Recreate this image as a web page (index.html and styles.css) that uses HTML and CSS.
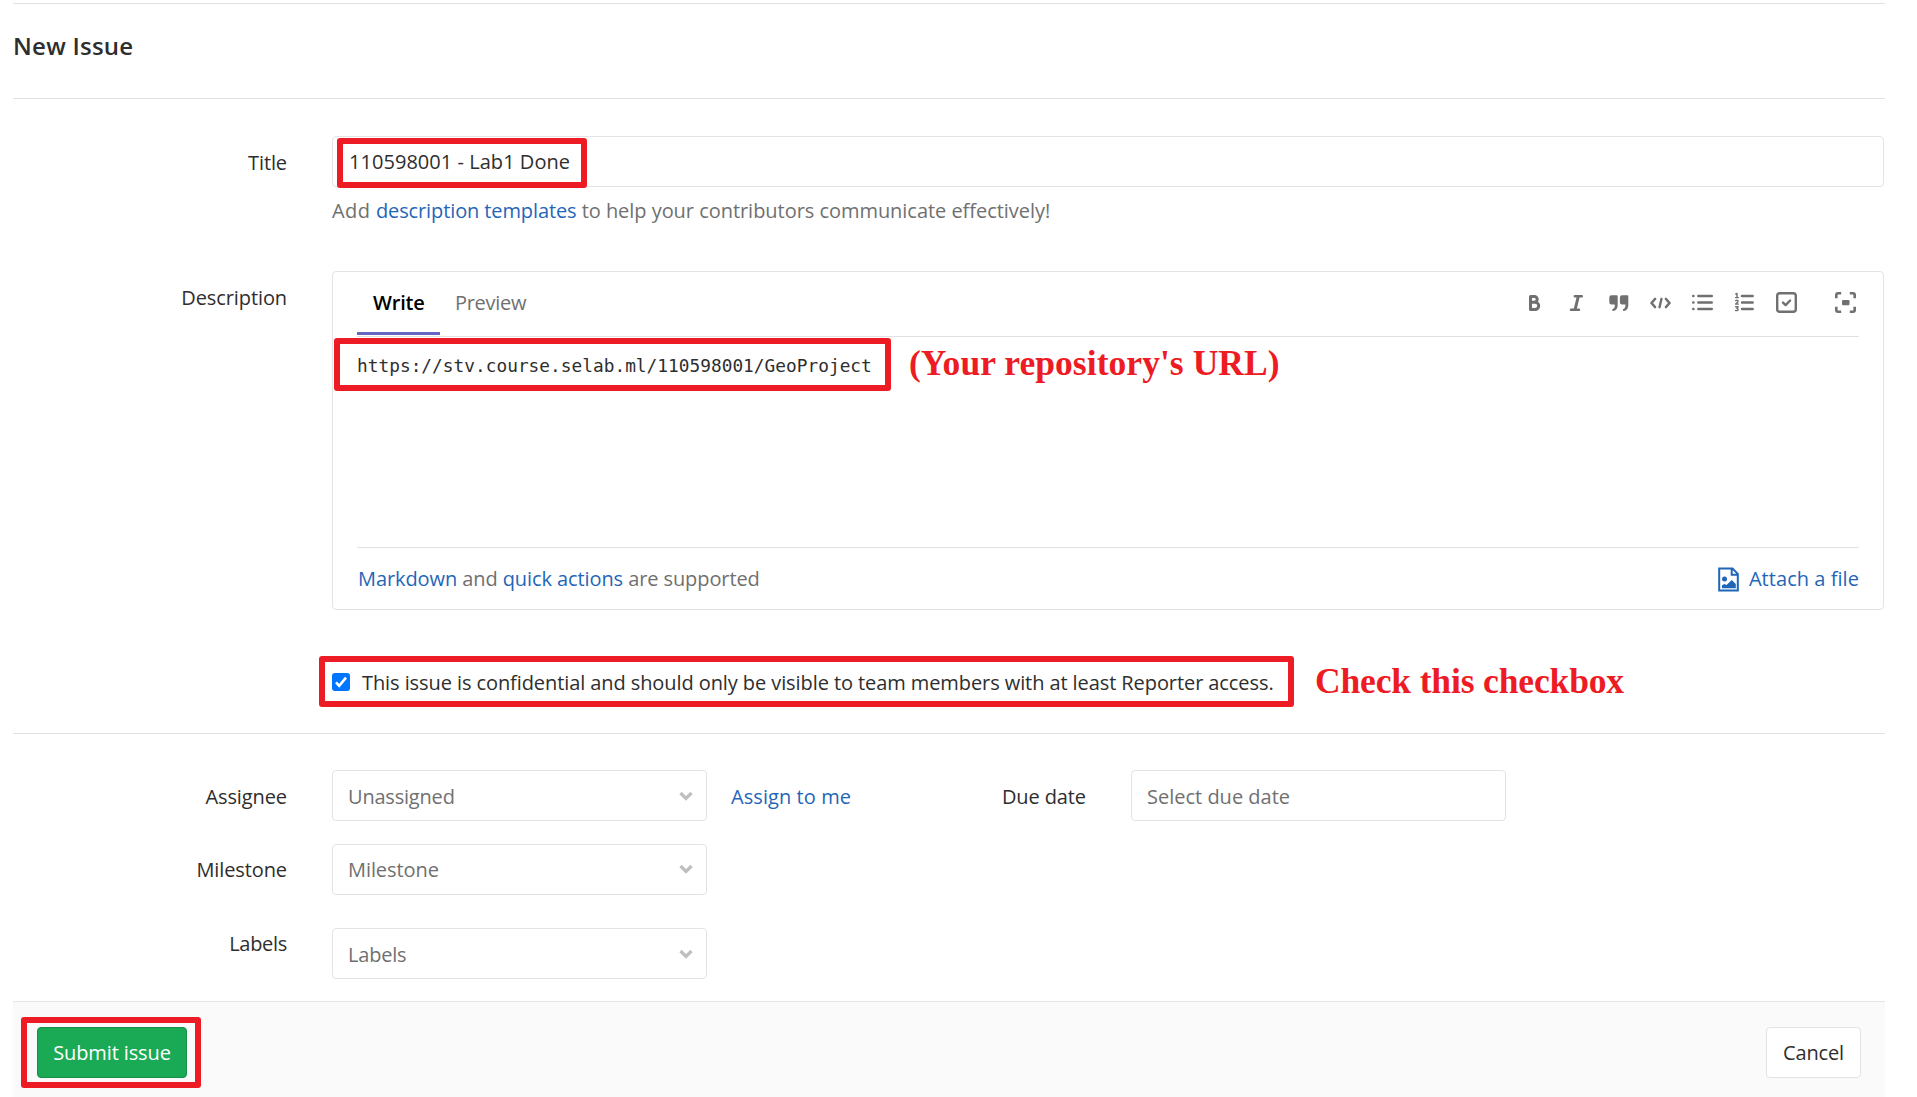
FILE: index.html
```html
<!DOCTYPE html>
<html lang="en">
<head>
<meta charset="utf-8">
<title>New Issue</title>
<link rel="stylesheet" href="styles.css">
</head>
<body>
<main class="page">
  <header class="page-header"><h1 class="page-title">New Issue</h1></header>

  <form class="issue-form">
    <div class="row title-row">
      <label class="label label-input">Title</label>
      <div class="field">
        <div class="input title-input">
          <span class="title-value">110598001 - Lab1 Done</span>
          <span class="mark mark-title"></span>
        </div>
        <p class="help"><span class="help-lead">Add </span><a class="link help-link">description templates</a> to help your contributors communicate effectively!</p>
      </div>
    </div>

    <div class="row description-row">
      <label class="label label-description">Description</label>
      <div class="editor">
        <div class="editor-head">
          <div class="tabs">
            <span class="tab tab-active">Write</span>
            <span class="tab">Preview</span>
          </div>
          <div class="toolbar">
            <svg class="icon" viewBox="0 0 21 21"><path class="s3" d="M6.500 4.500h3.900a2.800 2.800 0 0 1 0 5.700h-3.900zM6.500 10.200h4.600a3.500 3.500 0 0 1 0 7.300H6.500z"/></svg>
            <svg class="icon" viewBox="0 0 21 21"><path class="s25" d="M8.800 4.200h7M5 17.800h8"/><path class="s3" d="M12.300 4.500L9.100 17.500"/></svg>
            <svg class="icon" viewBox="0 0 21 21"><path class="fill" d="M3.500 3.200h5.300q.9 0 .9.900v9q0 5.300-4.200 5.800-1.300 0-1.300-1 0-1 1-1.200 1.600-.4 1.600-2.700v-1.500H3.500q-2.200 0-2.200-2.200v-4.900q0-2.200 2.200-2.200zM14.100 3.200h5.300q.9 0 .9.900v9q0 5.300-4.200 5.800-1.300 0-1.300-1 0-1 1-1.200 1.600-.4 1.600-2.700v-1.500h-3.300q-2.200 0-2.200-2.200v-4.900q0-2.200 2.200-2.200z"/></svg>
            <svg class="icon" viewBox="0 0 21 21"><path class="s26" d="M5 7L1.500 11 5 15M16 7l3.500 4-3.500 4"/><path class="s25" d="M11.500 6.800l-2 8.400"/></svg>
            <svg class="icon" viewBox="0 0 21 21"><path class="s25" d="M6.300 4h13.500M6.300 10.500h13.500M6.300 17h13.500"/><path class="s26" d="M1.300 4h.1M1.300 10.500h.1M1.300 17h.1"/></svg>
            <svg class="icon" viewBox="0 0 21 21"><path class="s25" d="M8 4h10.700M8 10.500h10.700M8 17h10.700"/><path class="s1" d="M1.800 2l1.200-.5v4M1.600 5.600h2.800M1.600 8.600q2.500-.9 2.500.7 0 .8-2.500 2.800h2.800M1.600 14.800h2.500l-1.200 1.700q1.400.1 1.200 1.300-.4 1.200-2.500.7"/></svg>
            <svg class="icon" viewBox="0 0 21 21"><rect class="s25" x="1.200" y="1.200" width="18.600" height="18.600" rx="2.600"/><path class="s25" d="M7 10.600l2.600 2.500 4.500-4.600"/></svg>
            <svg class="icon icon-full" viewBox="0 0 21 21"><path class="s26" d="M1.300 6.200V3q0-1.700 1.700-1.700h3.200M14.800 1.300H18q1.700 0 1.700 1.700v3.200M19.700 14.800V18q0 1.700-1.700 1.700h-3.200M6.200 19.700H3q-1.700 0-1.700-1.700v-3.200"/><rect class="fill" x="7" y="8" width="7.500" height="5.200" rx="1.200"/></svg>
          </div>
        </div>
        <div class="editor-body">
          <span class="url">https://stv.course.selab.ml/110598001/GeoProject</span>
          <span class="mark mark-url"></span>
          <span class="note note-url">(Your repository's URL)</span>
        </div>
        <div class="editor-foot">
          <span><a class="link">Markdown</a> and <a class="link">quick actions</a> are supported</span>
          <a class="link attach">
            <svg class="file-icon" viewBox="0 0 21 25"><path class="file-line" d="M1.200 1.500h13.300l5.300 5.300v16.700H1.200zM13.700 1.500v6.300h6"/><circle cx="6.500" cy="12" r="2.500"/><path d="M4 21.300v-3l2.500-1.300 2 .9 5.300-4.900 4 4v4.300z"/></svg>
            <span class="attach-text">Attach a file</span>
          </a>
        </div>
      </div>
    </div>

    <div class="confidential">
      <span class="checkbox"><svg viewBox="0 0 18 18"><path d="M4 9.400l3.200 3.400L14 4.600"/></svg></span>
      <span class="confidential-text">This issue is confidential and should only be visible to team members with at least Reporter access.</span>
      <span class="mark mark-confidential"></span>
      <span class="note note-checkbox">Check this checkbox</span>
    </div>

    <div class="meta">
      <div class="meta-column">
        <div class="row">
          <label class="label label-select">Assignee</label>
          <div class="select tight">Unassigned<svg class="chevron" viewBox="0 0 14 10"><path d="M1.500 2l5.500 5.500L12.500 2"/></svg></div>
          <a class="link assign">Assign to me</a>
        </div>
        <div class="row row-milestone">
          <label class="label label-milestone">Milestone</label>
          <div class="select select-milestone">Milestone<svg class="chevron" viewBox="0 0 14 10"><path d="M1.500 2l5.500 5.500L12.500 2"/></svg></div>
        </div>
        <div class="row row-labels">
          <label class="label label-labels">Labels</label>
          <div class="select tight">Labels<svg class="chevron" viewBox="0 0 14 10"><path d="M1.500 2l5.500 5.500L12.500 2"/></svg></div>
        </div>
      </div>
      <div class="row due">
        <label class="label label-select">Due date</label>
        <div class="select date">Select due date</div>
      </div>
    </div>

    <footer class="actions">
      <span class="submit-wrap"><button type="button" class="button submit">Submit issue</button><span class="mark mark-submit"></span></span>
      <button type="button" class="button cancel">Cancel</button>
    </footer>
  </form>
</main>
</body>
</html>
```
FILE: styles.css
```css
* { box-sizing: border-box; }
body {
  margin: 0;
  background: #fff;
  color: #2e2e2e;
  font: 20px/28px "Open Sans", "Noto Sans", sans-serif;
  letter-spacing: -0.085px;
}
.page { width: 1885px; height: 1097px; padding: 3px 0 0 13px; overflow: hidden; }
.page-header {
  height: 96px;
  padding-bottom: 11px;
  display: flex;
  align-items: center;
  border-top: 1px solid #e1e1e1;
  border-bottom: 1px solid #e1e1e1;
}
.page-title { margin: 0; font-size: 24px; font-weight: 600; letter-spacing: 0.25px; }
.link { color: #1f66b8; }

.row { display: flex; align-items: flex-start; }
.label { flex: none; width: 274px; margin-right: 45px; text-align: right; letter-spacing: -0.1px; }
.field { flex: 1; }
.title-row { padding: 37px 1px 0 0; }
.label-input { padding-top: 13px; }
.input, .select {
  position: relative;
  height: 51px;
  border: 1px solid #e3e3e3;
  border-radius: 4px;
  display: flex;
  align-items: center;
  background: #fff;
}
.title-input { padding: 1px 0 0 16px; letter-spacing: 0.04px; }
.help { margin: 10px 0 0; color: #707070; letter-spacing: -0.04px; }
.help-lead { letter-spacing: 0.4px; }
.help-link { letter-spacing: -0.11px; }

.description-row { margin-top: 46px; padding-right: 1px; }
.label-description { padding-top: 13px; }
.editor {
  flex: 1;
  height: 339px;
  padding: 0 24px;
  display: flex;
  flex-direction: column;
  border: 1px solid #e3e3e3;
  border-radius: 4px;
}
.editor-head { height: 65px; display: flex; justify-content: space-between; border-bottom: 1px solid #e1e1e1; }
.tabs { display: flex; }
.tab { height: 63px; padding: 17px 15px 0 15px; color: #707070; letter-spacing: -0.3px; }
.tab-active { width: 83px; padding-left: 16px; padding-right: 0; color: #000; font-weight: 600; letter-spacing: -0.2px; border-bottom: 3px solid #6666c4; }
.toolbar { display: flex; gap: 21px; padding: 20px 3px 0 0; }
.icon { width: 21px; height: 21px; fill: none; stroke: #707070; stroke-linecap: round; stroke-linejoin: round; }
.icon-full { margin-left: 17px; stroke-linecap: butt; }
.s1 { stroke-width: 1.4; }
.s25 { stroke-width: 2.4; }
.s26 { stroke-width: 2.6; }
.s3 { stroke-width: 3; }
.fill { fill: #707070; stroke: none; }
.editor-body { position: relative; height: 211px; padding-top: 15px; border-bottom: 1px solid #e1e1e1; }
.url { display: block; font: 17.8px/28px "DejaVu Sans Mono", monospace; letter-spacing: 0.02px; }
.editor-foot { flex: 1; padding: 1px 0 0 1px; display: flex; align-items: center; justify-content: space-between; color: #707070; letter-spacing: -0.09px; }
.attach { display: flex; align-items: center; gap: 10px; letter-spacing: 0.05px; }
.file-icon { width: 21px; height: 25px; fill: #1f66b8; }
.file-line { fill: none; stroke: #1f66b8; stroke-width: 2; }

.confidential { position: relative; height: 124px; padding: 24px 0 2px 319px; display: flex; align-items: center; border-bottom: 1px solid #e1e1e1; }
.checkbox { width: 18px; height: 18px; margin: -1px 12px 0 0; display: flex; border-radius: 3px; background: #0075ff; }
.checkbox path { fill: none; stroke: #fff; stroke-width: 2.6; }

.meta { height: 267px; padding-top: 36px; display: flex; }
.meta-column { width: 950px; }
.label-select { padding-top: 13px; }
.select { width: 375px; padding: 2px 13px 0 15px; justify-content: space-between; color: #707070; letter-spacing: -0.08px; }
.tight { letter-spacing: -0.2px; }
.chevron { width: 14px; height: 10px; margin-top: -1px; fill: none; stroke: #bfbfbf; stroke-width: 3.2; }
.assign { padding: 13px 0 0 24px; letter-spacing: 0.07px; }
.row-milestone { margin-top: 23px; }
.label-milestone { padding-top: 12px; }
.select-milestone { padding-top: 0; }
.row-labels { margin-top: 33px; }
.label-labels { padding-top: 2px; letter-spacing: -0.3px; }
.due .label { width: 123px; }
.date { letter-spacing: 0; }

.actions { height: 97px; padding: 25px 24px 0; display: flex; justify-content: space-between; align-items: flex-start; background: #fafafa; border-top: 1px solid #e5e5e5; }
.button { height: 51px; padding: 1px 0 0; font: inherit; letter-spacing: -0.12px; border-radius: 4px; }
.submit-wrap { position: relative; display: flex; }
.submit { width: 150px; color: #fff; background: #1aaa55; border: 1px solid #168f48; }
.cancel { width: 95px; color: #2e2e2e; background: #fff; border: 1px solid #e3e3e3; }

/* Red call-outs lying over the form */
.mark { position: absolute; border: 6px solid #ed1c24; border-radius: 3px; pointer-events: none; }
.mark-title { left: 4px; top: 1px; width: 250px; height: 50px; }
.mark-url { left: -23px; top: 1px; width: 557px; height: 53px; }
.mark-confidential { left: 306px; top: 46px; width: 975px; height: 51px; }
.mark-submit { left: -16px; top: -10px; width: 180px; height: 71px; }
.note { position: absolute; color: #ed1c24; font: bold 35.5px/40px "Liberation Serif", serif; white-space: nowrap; letter-spacing: 0.05px; }
.note-url { left: 552px; top: 6px; }
.note-checkbox { left: 1302px; top: 51px; letter-spacing: -0.14px; }
```
